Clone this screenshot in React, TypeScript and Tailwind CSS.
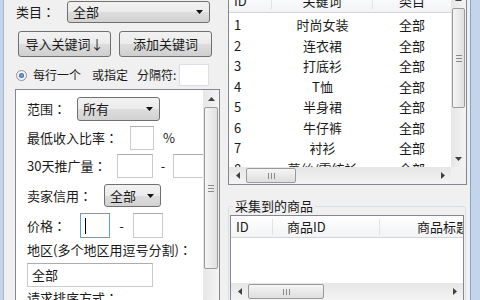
import React from "react";

type Dir = "up" | "down" | "left" | "right";

const TRI: Record<Dir, string> = {
  up: "0,4 3.5,0 7,4",
  down: "0,0 3.5,4 7,0",
  left: "4,0 0,3.5 4,7",
  right: "0,0 4,3.5 0,7",
};

function Tri({ dir, color = "#404040" }: { dir: Dir; color?: string }) {
  const vertical = dir === "up" || dir === "down";
  return (
    <svg width={vertical ? 7 : 4} height={vertical ? 4 : 7} viewBox={vertical ? "0 0 7 4" : "0 0 4 7"}>
      <polygon points={TRI[dir]} fill={color} />
    </svg>
  );
}

// fullwidth colon drawn centred, as the dialog font does
function Label({ text, className }: { text: string; className?: string }) {
  return (
    <span className={`shrink-0 whitespace-nowrap ${className ?? ""}`}>
      {text}
      <span className="font-['Noto_Sans_CJK_TC',sans-serif]">：</span>
    </span>
  );
}

function Combo({ text, className }: { text: string; className: string }) {
  return (
    <div
      className={`flex items-center justify-between rounded-[3px] border border-[#707070] bg-[linear-gradient(to_bottom,#f2f2f2,#ebebeb_50%,#dddddd_51%,#d2d2d2)] pl-[5px] pr-[6px] ${className}`}
    >
      <span>{text}</span>
      <Tri dir="down" color="#111" />
    </div>
  );
}

function TextBox({ className, text, focused }: { className: string; text?: string; focused?: boolean }) {
  return (
    <div
      className={`flex items-center bg-white pl-[4px] ${
        focused ? "border border-[#5a9fe0]" : "border border-[#c6cad1] border-t-[#abadb3]"
      } ${className}`}
    >
      {focused && <span className="h-[16px] w-[1px] bg-black" />}
      {text}
    </div>
  );
}

function Button({ children }: { children: React.ReactNode }) {
  return (
    <div className="flex h-[26px] w-[93px] items-center justify-center rounded-[3px] border border-[#707070] bg-[linear-gradient(to_bottom,#f2f2f2,#ebebeb_50%,#dddddd_51%,#cfcfcf)]">
      {children}
    </div>
  );
}

function VThumb({ className }: { className: string }) {
  return (
    <div
      className={`mx-[1px] flex flex-col items-center justify-center gap-[2px] rounded-[2px] border border-[#9a9a9a] bg-[linear-gradient(to_right,#f5f5f5,#e0e0e0)] ${className}`}
    >
      <span className="h-[1px] w-[6px] bg-[#8a8a8a]" />
      <span className="h-[1px] w-[6px] bg-[#8a8a8a]" />
      <span className="h-[1px] w-[6px] bg-[#8a8a8a]" />
    </div>
  );
}

function HScroll({ thumb, className }: { thumb: string; className: string }) {
  return (
    <div className={`flex h-[17px] items-stretch bg-[linear-gradient(to_bottom,#e6e6e6,#f4f4f4)] ${className}`}>
      <div className="flex w-[17px] shrink-0 items-center justify-center">
        <Tri dir="left" />
      </div>
      <div
        className={`my-[1px] flex items-center justify-center gap-[2px] rounded-[2px] border border-[#9a9a9a] bg-[linear-gradient(to_bottom,#f5f5f5,#dedede)] ${thumb}`}
      >
        <span className="h-[6px] w-[1px] bg-[#8a8a8a]" />
        <span className="h-[6px] w-[1px] bg-[#8a8a8a]" />
        <span className="h-[6px] w-[1px] bg-[#8a8a8a]" />
      </div>
      <div className="flex-1" />
      <div className="flex w-[17px] shrink-0 items-center justify-center">
        <Tri dir="right" />
      </div>
    </div>
  );
}

const keywords = ["时尚女装", "连衣裙", "打底衫", "T恤", "半身裙", "牛仔裤", "衬衫", "蕾丝/雪纺衫"];

export default function App() {
  return (
    <div className="flex h-[300px] w-[480px] overflow-hidden bg-[#f0f0f0] font-['Microsoft_YaHei','Noto_Sans_CJK_SC',sans-serif] text-[13px] leading-[16px] text-[#1a1a1a]">
      <div className="w-[4px] shrink-0 border-r border-[#a4b6cc] bg-[#c2d5eb]" />

      {/* left column */}
      <div className="flex w-[224px] shrink-0 flex-col">
        <div className="mt-[1px] flex h-[22px] items-center pl-[12px]">
          <Label text="类目" className="w-[51px]" />
          <Combo text="全部" className="h-[22px] w-[143px]" />
        </div>

        <div className="mt-[8px] flex gap-[8px] pl-[14px]">
          <Button>导入关键词↓</Button>
          <Button>添加关键词</Button>
        </div>

        <div className="mt-[7px] flex h-[22px] items-center pl-[12px] text-[12px]">
          <span className="flex h-[11px] w-[11px] items-center justify-center rounded-full border border-[#8e8f8f] bg-[#f4f4f4]">
            <span className="h-[5px] w-[5px] rounded-full bg-[radial-gradient(circle,#7aaae6,#1d4f98)]" />
          </span>
          <span className="ml-[6px]">每行一个</span>
          <span className="ml-[11px]">或指定</span>
          <span className="ml-[9px]">分隔符:</span>
          <div className="ml-[3px] h-[22px] w-[30px] border border-[#dbdfe6] bg-white" />
        </div>

        <div className="ml-[11px] mt-[3px] flex w-[205px] flex-1 border border-[#828790] bg-white">
          <div className="flex min-w-0 flex-1 flex-col overflow-hidden pl-[11px]">
            <div className="mt-[7px] flex h-[24px] items-center">
              <Label text="范围" className="w-[50px]" />
              <Combo text="所有" className="h-[24px] w-[83px] shrink-0" />
            </div>
            <div className="mt-[5px] flex h-[24px] items-center">
              <Label text="最低收入比率" className="w-[103px]" />
              <TextBox className="h-[24px] w-[24px] shrink-0" />
              <span className="ml-[9px]">%</span>
            </div>
            <div className="mt-[4px] flex h-[24px] items-center">
              <Label text="30天推广量" className="w-[90px]" />
              <TextBox className="h-[24px] w-[36px] shrink-0" />
              <span className="w-[20px] shrink-0 text-center">-</span>
              <TextBox className="h-[24px] w-[36px] shrink-0" />
            </div>
            <div className="mt-[6px] flex h-[23px] items-center">
              <Label text="卖家信用" className="w-[77px]" />
              <Combo text="全部" className="h-[23px] w-[57px] shrink-0" />
            </div>
            <div className="mt-[6px] flex h-[25px] items-center">
              <Label text="价格" className="w-[53px]" />
              <TextBox focused className="h-[25px] w-[30px] shrink-0" />
              <span className="w-[23px] shrink-0 text-center">-</span>
              <TextBox className="h-[25px] w-[30px] shrink-0" />
            </div>
            <div className="mt-[4px] h-[17px]">
              <Label text="地区(多个地区用逗号分割)" />
            </div>
            <TextBox text="全部" className="mt-[4px] h-[24px] w-[126px] shrink-0" />
            <div className="mt-[3px]">
              <Label text="请求排序方式" />
            </div>
          </div>

          <div className="flex w-[16px] shrink-0 flex-col bg-[linear-gradient(to_right,#e6e6e6,#f4f4f4)]">
            <div className="flex h-[17px] shrink-0 items-center justify-center">
              <Tri dir="up" />
            </div>
            <VThumb className="h-[162px] shrink-0" />
          </div>
        </div>
      </div>

      {/* right column */}
      <div className="flex w-[239px] shrink-0 flex-col">
        <div className="-mt-[11px] flex h-[196px] shrink-0 flex-col border border-[#828790] bg-white">
          <div className="flex h-[177px] shrink-0">
            <div className="flex w-[222px] flex-col overflow-hidden">
              <div className="flex h-[23px] shrink-0 items-center border-b border-[#d5d5d5] bg-[linear-gradient(to_bottom,#ffffff,#f2f3f5)]">
                <span className="w-[43px] shrink-0 border-r border-[#e3e3e3] pl-[5px]">ID</span>
                <span className="w-[101px] shrink-0 border-r border-[#e3e3e3] text-center">关键词</span>
                <span className="w-[78px] shrink-0 text-center">类目</span>
              </div>
              <div className="pt-[2px]">
                {keywords.map((k, i) => (
                  <div key={k} className="flex h-[20.5px] items-center">
                    <span className="w-[43px] shrink-0 pl-[5px]">{i + 1}</span>
                    <span className="w-[101px] shrink-0 text-center">{k}</span>
                    <span className="w-[78px] shrink-0 text-center">全部</span>
                  </div>
                ))}
              </div>
            </div>
            <div className="flex w-[15px] shrink-0 flex-col bg-[linear-gradient(to_right,#e6e6e6,#f4f4f4)]">
              <div className="flex h-[17px] shrink-0 items-center justify-center">
                <Tri dir="up" />
              </div>
              <VThumb className="mt-[1px] h-[100px] shrink-0" />
              <div className="flex-1" />
              <div className="flex h-[17px] shrink-0 items-center justify-center">
                <Tri dir="down" />
              </div>
            </div>
          </div>
          <div className="flex">
            <HScroll thumb="w-[50px]" className="w-[222px]" />
            <div className="h-[17px] w-[15px] bg-[#f0f0f0]" />
          </div>
        </div>

        <div className="mt-[21px] flex w-[238px] flex-1 flex-col rounded-[3px] border border-[#d5dfe5]">
          <div className="-mt-[9px] ml-[4px] w-fit bg-[#f0f0f0] px-[2px]">采集到的商品</div>
          <div className="ml-[1px] mt-[1px] flex h-[87px] w-[234px] shrink-0 flex-col border border-[#828790] bg-white">
            <div className="flex h-[22px] shrink-0 items-center overflow-hidden whitespace-nowrap border-b border-[#d5d5d5] bg-[linear-gradient(to_bottom,#ffffff,#f2f3f5)]">
              <span className="w-[42px] shrink-0 border-r border-[#e3e3e3] pl-[5px]">ID</span>
              <span className="w-[107px] shrink-0 border-r border-[#e3e3e3] pl-[14px]">商品ID</span>
              <span className="shrink-0 pl-[37px]">商品标题</span>
            </div>
            <div className="h-[45px] shrink-0" />
            <HScroll thumb="w-[76px]" className="w-full" />
          </div>
        </div>
      </div>

      <div className="w-[3px] shrink-0" />
      <div className="w-[10px] shrink-0 border-l border-[#8ea3bd] bg-[#c2d5eb]" />
    </div>
  );
}
